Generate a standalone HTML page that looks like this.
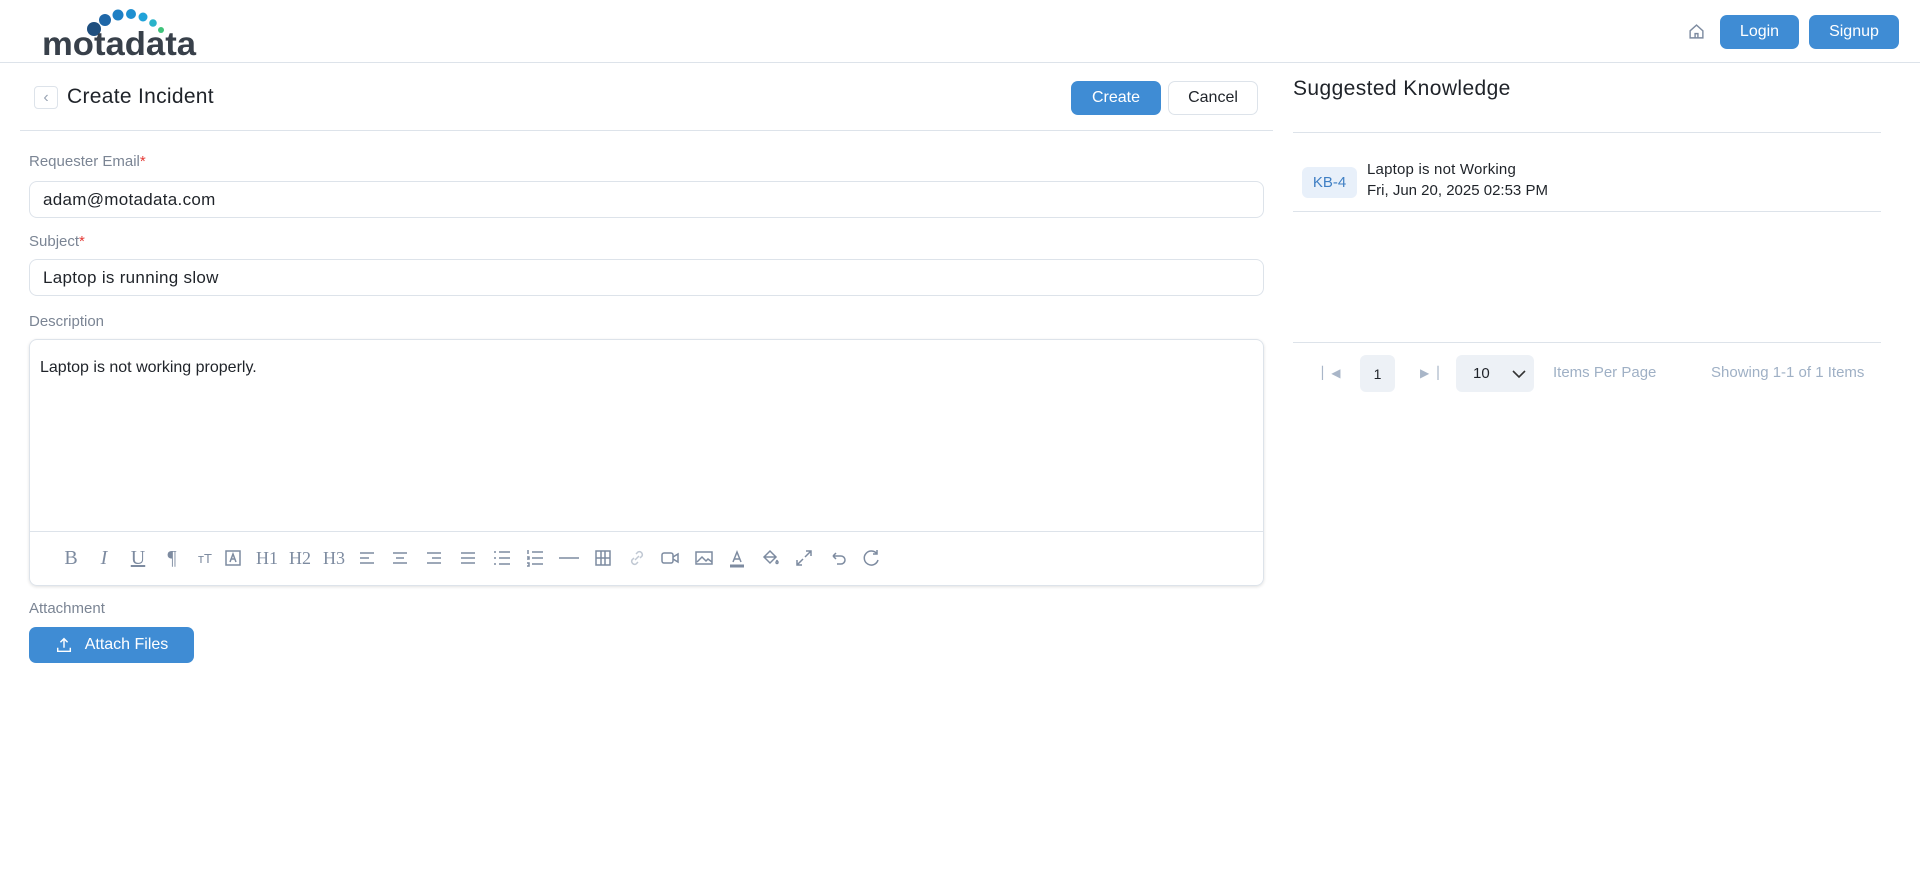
<!DOCTYPE html>
<html><head><meta charset="utf-8"><style>
*{box-sizing:border-box;margin:0;padding:0}
body{width:1920px;height:890px;background:#fff;font-family:"Liberation Sans",sans-serif;color:#1f2329;position:relative;overflow:hidden}
.a{position:absolute}
.btn{position:absolute;background:#3f8cd4;color:#fff;border-radius:7px;font-size:16px;display:flex;align-items:center;justify-content:center}
.lbl{position:absolute;left:29px;font-size:15px;color:#7b8594}
.req{color:#e53935}
.inp{position:absolute;left:29px;width:1235px;border:1px solid #dde3ea;border-radius:8px;font-size:17px;letter-spacing:0.3px;padding-left:13px;display:flex;align-items:center}
.line{position:absolute;height:1px;background:#dde3ea}
.tb{position:absolute;top:546px;height:24px;width:28px;display:flex;align-items:center;justify-content:center;color:#7d8ba0;font-family:"Liberation Serif",serif;font-size:20px}
.tb svg{width:20px;height:20px;stroke:#7d8ba0;fill:none;stroke-width:1.5}
</style></head><body>
<!-- logo -->
<svg class="a" style="left:41px;top:8px" width="160" height="52" viewBox="0 0 160 52">
<circle cx="53" cy="21" r="7" fill="#1f4f7f"/><circle cx="64" cy="12" r="6" fill="#1f67a8"/><circle cx="77" cy="7" r="5.5" fill="#1e7fc4"/><circle cx="90" cy="6" r="5" fill="#1e8fd0"/><circle cx="102" cy="9" r="4.5" fill="#21a3d9"/><circle cx="112" cy="15" r="3.8" fill="#2ab3c9"/><circle cx="120" cy="22" r="3" fill="#3fc37a"/>
<text x="1" y="47" font-family="Liberation Sans,sans-serif" font-size="33" font-weight="bold" fill="#38404a" textLength="154" lengthAdjust="spacingAndGlyphs">motadata</text>
</svg>
<svg class="a" style="left:1688px;top:23px" width="17" height="17" viewBox="0 0 24 24" fill="none" stroke="#7d8ba0" stroke-width="2"><path d="M3 11l9-8 9 8v10H3z M10 21v-6h4v6"/></svg>
<div class="btn" style="left:1720px;top:15px;width:79px;height:34px">Login</div>
<div class="btn" style="left:1809px;top:15px;width:90px;height:34px">Signup</div>
<div class="line" style="left:0;top:62px;width:1920px"></div>

<div class="a" style="left:34px;top:86px;width:24px;height:23px;border:1px solid #dde3ea;border-radius:4px;color:#9aa5b4;font-size:16px;text-align:center;line-height:21px">&lsaquo;</div>
<div class="a" style="left:67px;top:85px;font-size:21px;letter-spacing:0.3px">Create Incident</div>
<div class="btn" style="left:1071px;top:81px;width:90px;height:34px;font-size:16px">Create</div>
<div class="a" style="left:1168px;top:81px;width:90px;height:34px;border:1px solid #dde3ea;border-radius:7px;font-size:16px;display:flex;align-items:center;justify-content:center">Cancel</div>
<div class="line" style="left:20px;top:130px;width:1253px"></div>

<div class="lbl" style="top:153px">Requester Email<span class="req">*</span></div>
<div class="inp" style="top:181px;height:37px">adam@motadata.com</div>
<div class="lbl" style="top:233px">Subject<span class="req">*</span></div>
<div class="inp" style="top:259px;height:37px">Laptop is running slow</div>
<div class="lbl" style="top:313px">Description</div>
<div class="a" style="left:29px;top:339px;width:1235px;height:247px;border:1px solid #dde3ea;border-radius:8px;box-shadow:0 1px 3px rgba(0,0,0,.12)">
<div class="a" style="left:10px;top:19px;font-size:16px">Laptop is not working properly.</div>
<div class="line" style="left:0;top:191px;width:1233px"></div>
</div>
<div class="tb" style="left:57px">B</div>
<div class="tb" style="left:90px;font-style:italic">I</div>
<div class="tb" style="left:124px;text-decoration:underline">U</div>
<div class="tb" style="left:158px">¶</div>
<div class="tb" style="left:191px;font-family:'Liberation Sans';font-size:13px">тT</div>
<div class="tb" style="left:219px"><svg viewBox="0 0 20 20"><rect x="3" y="3" width="14" height="14"/><path d="M7 14l3-8 3 8M8 11h4"/></svg></div>
<div class="tb" style="left:253px;font-size:18px">H1</div>
<div class="tb" style="left:286px;font-size:18px">H2</div>
<div class="tb" style="left:320px;font-size:18px">H3</div>
<div class="tb" style="left:353px"><svg viewBox="0 0 20 20"><path d="M3 5h14M3 10h9M3 15h14"/></svg></div>
<div class="tb" style="left:386px"><svg viewBox="0 0 20 20"><path d="M3 5h14M6 10h8M3 15h14"/></svg></div>
<div class="tb" style="left:420px"><svg viewBox="0 0 20 20"><path d="M3 5h14M8 10h9M3 15h14"/></svg></div>
<div class="tb" style="left:454px"><svg viewBox="0 0 20 20"><path d="M3 5h14M3 10h14M3 15h14"/></svg></div>
<div class="tb" style="left:488px"><svg viewBox="0 0 20 20"><path d="M7 4h11M7 10h11M7 16h11M2 4h2M2 10h2M2 16h2"/></svg></div>
<div class="tb" style="left:521px"><svg viewBox="0 0 20 20"><path d="M7 4h11M7 10h11M7 16h11M3 2v4M2 9h2v2H2M2 15h2v3H2"/></svg></div>
<div class="tb" style="left:555px"><svg viewBox="0 0 20 20"><path d="M0 10h20"/></svg></div>
<div class="tb" style="left:589px"><svg viewBox="0 0 20 20"><rect x="3" y="3" width="14" height="14"/><path d="M3 10h14M8 3v14M12 3v14"/></svg></div>
<div class="tb" style="left:623px"><svg viewBox="0 0 20 20" style="stroke:#c0c8d3"><path d="M8 12l4-4M9 6l2-2a3 3 0 014 4l-2 2M11 14l-2 2a3 3 0 01-4-4l2-2"/></svg></div>
<div class="tb" style="left:656px"><svg viewBox="0 0 20 20"><rect x="2" y="5" width="11" height="10" rx="2"/><path d="M13 9l5-3v8l-5-3"/></svg></div>
<div class="tb" style="left:690px"><svg viewBox="0 0 20 20"><rect x="2" y="4" width="16" height="12"/><path d="M3 14l5-5 4 4 2-2 4 3"/></svg></div>
<div class="tb" style="left:723px"><svg viewBox="0 0 20 20"><path d="M6 14l4-10 4 10M7 11h6"/><path d="M3 18h14" stroke-width="3"/></svg></div>
<div class="tb" style="left:756px"><svg viewBox="0 0 20 20"><path d="M4 9l6-6 6 6-6 6zM4 9h12M16 14c0 2 2 2 2 0-1-2-1-2-2 0"/></svg></div>
<div class="tb" style="left:790px"><svg viewBox="0 0 20 20"><path d="M3 17l6-6M3 12v5h5M17 3l-6 6M12 3h5v5"/></svg></div>
<div class="tb" style="left:824px"><svg viewBox="0 0 20 20"><path d="M5 8h8a4 4 0 010 8H9M5 8l3-3M5 8l3 3"/></svg></div>
<div class="tb" style="left:857px"><svg viewBox="0 0 20 20"><path d="M16 6a7 7 0 10 1 6M16 2v4h-4"/></svg></div>

<div class="lbl" style="top:600px">Attachment</div>
<div class="btn" style="left:29px;top:627px;width:165px;height:36px;font-size:16px"><svg width="18" height="18" viewBox="0 0 20 20" fill="none" stroke="#fff" stroke-width="1.6" style="margin-right:12px"><path d="M10 13V3M6 7l4-4 4 4M3 13v4h14v-4"/></svg>Attach Files</div>

<div class="a" style="left:1293px;top:77px;font-size:21px;letter-spacing:0.4px">Suggested Knowledge</div>
<div class="line" style="left:1293px;top:132px;width:588px"></div>
<div class="a" style="left:1302px;top:167px;width:55px;height:31px;background:#e8f0fa;border-radius:6px;color:#3f7fc4;font-size:15px;display:flex;align-items:center;justify-content:center">KB-4</div>
<div class="a" style="left:1367px;top:161px;font-size:15px;letter-spacing:0.2px">Laptop is not Working</div>
<div class="a" style="left:1367px;top:182px;font-size:15px">Fri, Jun 20, 2025 02:53 PM</div>
<div class="line" style="left:1293px;top:211px;width:588px"></div>
<div class="line" style="left:1293px;top:342px;width:588px"></div>
<div class="a" style="left:1322px;top:366px;color:#a9b6c8;font-size:12px">▏◀</div>
<div class="a" style="left:1360px;top:355px;width:35px;height:37px;background:#edf1f6;border-radius:6px;font-size:14px;display:flex;align-items:center;justify-content:center">1</div>
<div class="a" style="left:1420px;top:366px;color:#a9b6c8;font-size:12px">▶▕</div>
<div class="a" style="left:1456px;top:355px;width:78px;height:37px;background:#edf1f6;border-radius:6px;font-size:15px;padding-left:17px;display:flex;align-items:center">10<svg style="margin-left:22px" width="14" height="10" viewBox="0 0 14 10" fill="none" stroke="#333" stroke-width="1.6"><path d="M1 2l6 6 6-6"/></svg></div>
<div class="a" style="left:1553px;top:364px;color:#9fb0c5;font-size:15px">Items Per Page</div>
<div class="a" style="left:1711px;top:364px;color:#9fb0c5;font-size:15px">Showing 1-1 of 1 Items</div>
</body></html>
